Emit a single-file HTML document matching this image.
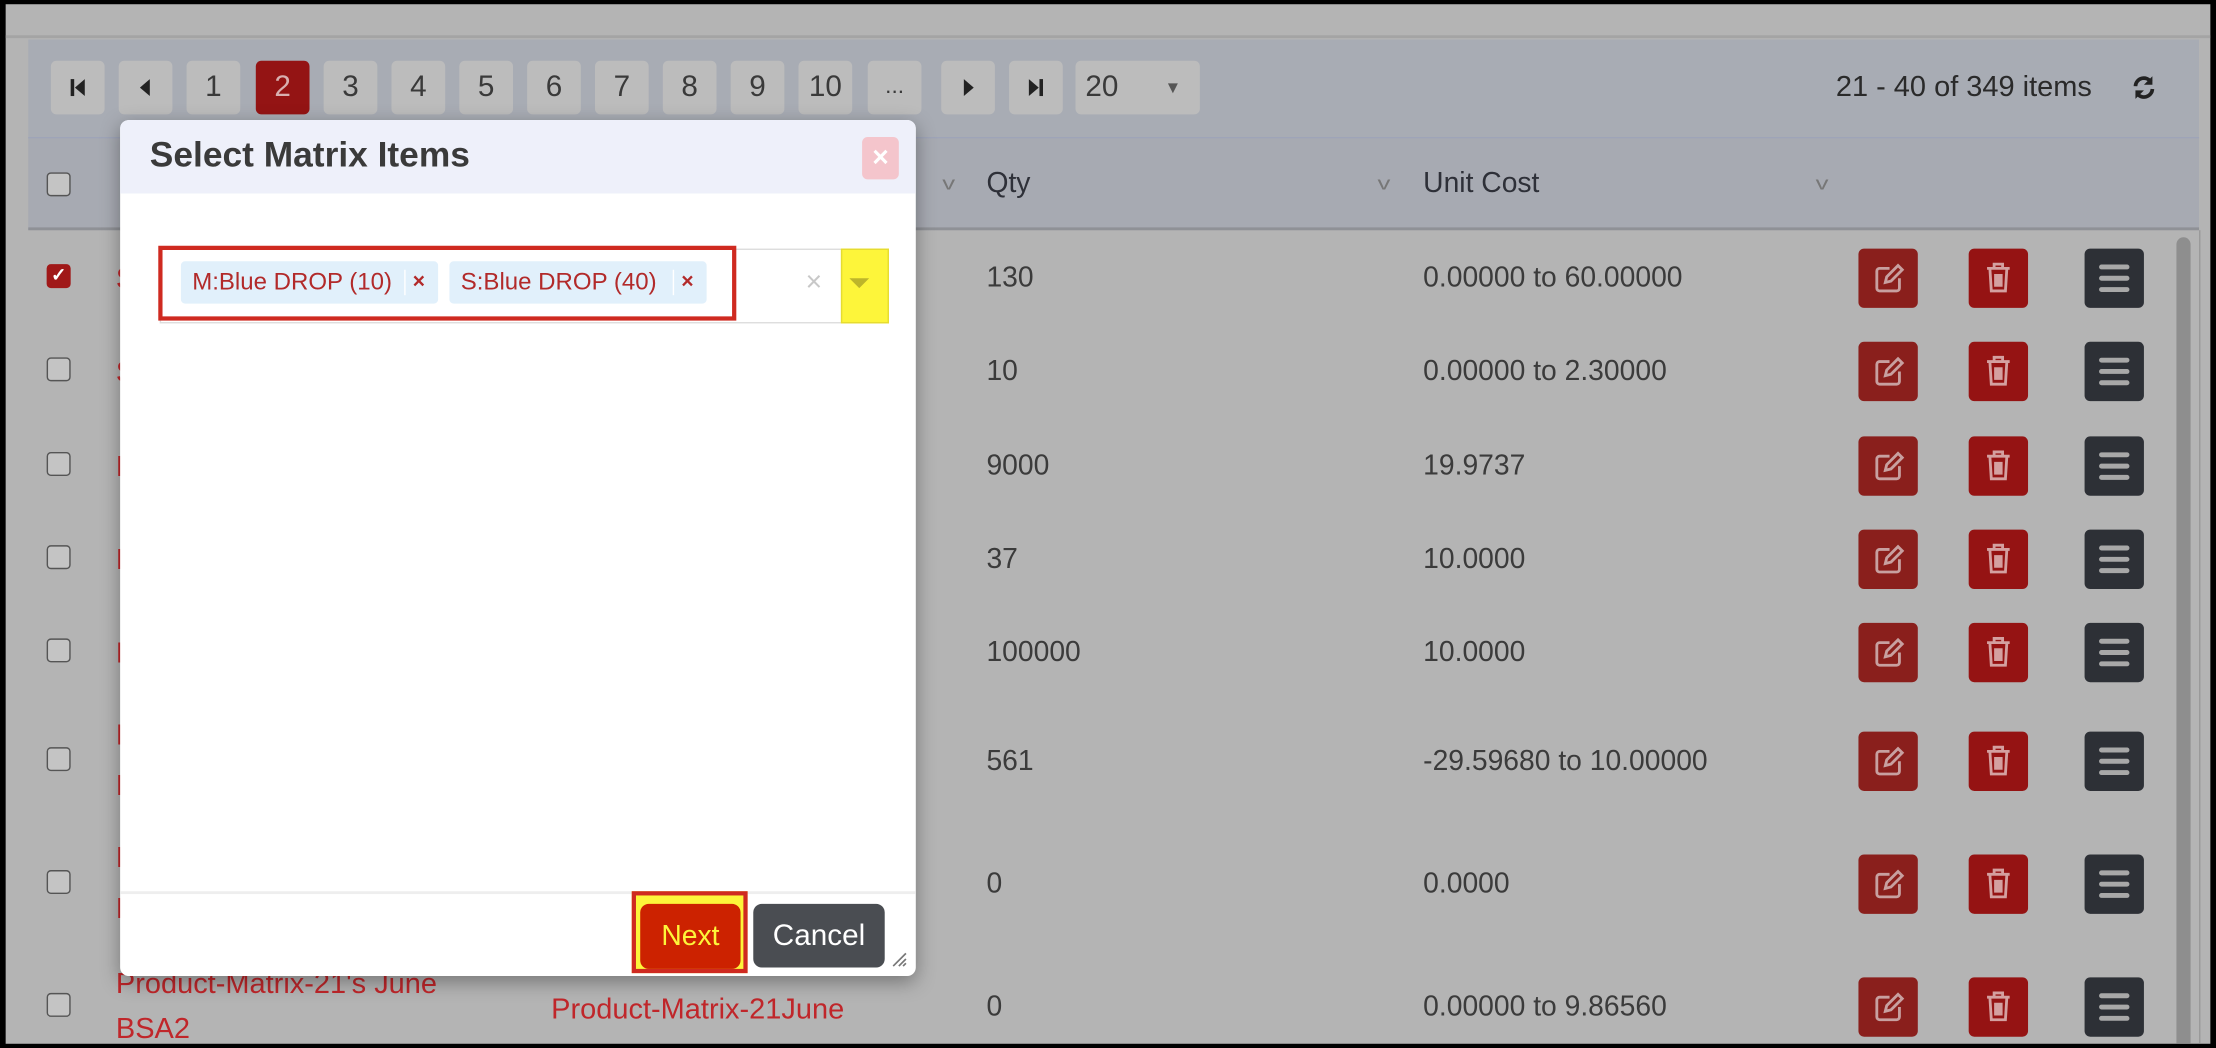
<!DOCTYPE html>
<html><head><meta charset="utf-8"><style>
*{box-sizing:border-box;margin:0;padding:0}
html,body{width:2216px;height:1048px;overflow:hidden;background:#000}
#s{position:absolute;left:0;top:0;width:1568px;height:742px;transform:scale(1.41327,1.4124);transform-origin:0 0;font-family:"Liberation Sans",sans-serif;background:#000}
.a{position:absolute}
#page{left:4px;top:3px;width:1560px;height:736px;background:#b4b4b4;overflow:hidden}
.pb{position:absolute;top:40px;width:38px;height:38px;background:#bcbcbc;border-radius:4px;color:#3a3a3a;font-size:21px;text-align:center;line-height:38px}
.txt{position:absolute;color:#3b3b3b;font-size:20px}
.red{position:absolute;color:#c0262a;font-size:20.5px}
.cb{position:absolute;left:29px;width:17px;height:17px;border:1.5px solid #555;border-radius:3px;background:#c4c4c4}
.bt{position:absolute;width:42px;height:42px;border-radius:4px}
.e{background:#8a1f1c;left:1311px}.d{background:#951313;left:1389px}.m{background:#2d3036;left:1471px}
.chev{position:absolute;color:#777;font-size:13px;transform:scaleX(1.4)}
</style></head><body><div id="s">
<div class="a" id="page">
 <div class="a" style="left:0;top:22px;width:1560px;height:2px;background:#a4a4a4"></div>
 <div class="a" style="left:16px;top:25px;width:1536px;height:70px;background:#a8acb4"></div>
 <div class="a" style="left:16px;top:94px;width:1536px;height:66px;background:#a7aab2;border-top:1px solid #9ea4b8;border-bottom:2px solid #8f9196"></div>
 <div class="pb" style="left:32px"><svg width="14" height="14" viewBox="0 0 14 14" style="margin-top:12px"><rect x="2" y="1" width="2.5" height="12" fill="#222"/><path d="M12 1 L5 7 L12 13Z" fill="#222"/></svg></div>
 <div class="pb" style="left:80px"><svg width="14" height="14" viewBox="0 0 14 14" style="margin-top:12px"><path d="M10 1 L3 7 L10 13Z" fill="#222"/></svg></div>
 <div class="pb" style="left:128px">1</div>
 <div class="pb" style="left:177px;background:#941414;color:#d8b0b0">2</div>
 <div class="pb" style="left:225px">3</div>
 <div class="pb" style="left:273px">4</div>
 <div class="pb" style="left:321px">5</div>
 <div class="pb" style="left:369px">6</div>
 <div class="pb" style="left:417px">7</div>
 <div class="pb" style="left:465px">8</div>
 <div class="pb" style="left:513px">9</div>
 <div class="pb" style="left:561px">10</div>
 <div class="pb" style="left:610px;font-size:16px">...</div>
 <div class="pb" style="left:662px"><svg width="14" height="14" viewBox="0 0 14 14" style="margin-top:12px"><path d="M4 1 L11 7 L4 13Z" fill="#222"/></svg></div>
 <div class="pb" style="left:710px"><svg width="14" height="14" viewBox="0 0 14 14" style="margin-top:12px"><path d="M2 1 L9 7 L2 13Z" fill="#222"/><rect x="9.5" y="1" width="2.5" height="12" fill="#222"/></svg></div>
 <div class="pb" style="left:757px;width:88px;text-align:left;padding-left:7px">20<span style="position:absolute;left:63px;font-size:12px;color:#555">▼</span></div>
 <div class="txt" style="left:1295px;top:47px;color:#2a2a2a;font-size:20.5px">21 - 40 of 349 items</div>
 <svg class="a" style="left:1503px;top:49px" width="20" height="20" viewBox="0 0 20 20"><path d="M4 9 A6 6 0 0 1 15 6" stroke="#222" stroke-width="2.6" fill="none"/><path d="M16 2 L16 8 L10 8Z" fill="#222"/><path d="M16 11 A6 6 0 0 1 5 14" stroke="#222" stroke-width="2.6" fill="none"/><path d="M4 18 L4 12 L10 12Z" fill="#222"/></svg>
 <div class="cb" style="top:119px"></div>
 <div class="chev" style="left:664px;top:119px">v</div>
 <div class="txt" style="left:694px;top:116px;color:#2e3038">Qty</div>
 <div class="chev" style="left:972px;top:119px">v</div>
 <div class="txt" style="left:1003px;top:116px;color:#2e3038">Unit Cost</div>
 <div class="chev" style="left:1282px;top:119px">v</div>
 <div class="cb" style="top:184px;background:#a01818;border-color:#a01818;color:#fff;font-size:13px;line-height:14px;text-align:center;font-weight:bold">✓</div>
 <div class="red" style="left:78px;top:183px">S</div><div class="txt" style="left:694px;top:183px">130</div><div class="txt" style="left:1003px;top:183px">0.00000 to 60.00000</div>
 <div class="cb" style="top:250px"></div><div class="red" style="left:78px;top:249px">S</div><div class="txt" style="left:694px;top:249px">10</div><div class="txt" style="left:1003px;top:249px">0.00000 to 2.30000</div>
 <div class="cb" style="top:317px"></div><div class="red" style="left:78px;top:316px">P</div><div class="txt" style="left:694px;top:316px">9000</div><div class="txt" style="left:1003px;top:316px">19.9737</div>
 <div class="cb" style="top:383px"></div><div class="red" style="left:78px;top:382px">P</div><div class="txt" style="left:694px;top:382px">37</div><div class="txt" style="left:1003px;top:382px">10.0000</div>
 <div class="cb" style="top:449px"></div><div class="red" style="left:78px;top:448px">P</div><div class="txt" style="left:694px;top:448px">100000</div><div class="txt" style="left:1003px;top:448px">10.0000</div>
 <div class="cb" style="top:526px"></div><div class="red" style="left:78px;top:506px">P</div><div class="red" style="left:78px;top:542px">B</div><div class="txt" style="left:694px;top:525px">561</div><div class="txt" style="left:1003px;top:525px">-29.59680 to 10.00000</div>
 <div class="cb" style="top:613px"></div><div class="red" style="left:78px;top:593px">P</div><div class="red" style="left:78px;top:629px">B</div><div class="txt" style="left:694px;top:612px">0</div><div class="txt" style="left:1003px;top:612px">0.0000</div>
 <div class="cb" style="top:700px"></div><div class="red" style="left:78px;top:682px">Product-Matrix-21's June</div><div class="red" style="left:78px;top:714px">BSA2</div><div class="red" style="left:386px;top:700px">Product-Matrix-21June</div><div class="txt" style="left:694px;top:699px">0</div><div class="txt" style="left:1003px;top:699px">0.00000 to 9.86560</div>
 <div id="btns"></div>
 <div class="a" style="left:1536px;top:165px;width:10px;height:580px;background:#8e8e8e;border-radius:5px"></div>
 <div class="a" style="left:1552px;top:160px;width:1px;height:580px;background:#999"></div>
 <div class="a" style="left:81px;top:82px;width:563px;height:606px;background:#fff;border-radius:6px;box-shadow:0 4px 14px rgba(0,0,0,.35);overflow:hidden">
  <div class="a" style="left:0;top:0;width:563px;height:52px;background:#eef0fa"></div>
  <div class="a" style="left:21px;top:11px;font-size:25px;font-weight:bold;color:#3a3a3a">Select Matrix Items</div>
  <div class="a" style="left:525px;top:12px;width:26px;height:30px;background:#f4c5cc;border-radius:4px;color:#fff;font-size:20px;font-weight:bold;text-align:center;line-height:30px">×</div>
  <div class="a" style="left:28px;top:91px;width:516px;height:53px;border:1.5px solid #ddd"></div>
  <div class="a" style="left:27px;top:89px;width:409px;height:53px;border:3px solid #cf2a20"></div>
  <div class="a" style="left:43px;top:100px;width:182px;height:30px;background:#e1f0fb;border-radius:3px;color:#b22a2a;font-size:17px;line-height:30px;padding-left:8px">M:Blue DROP (10)<span style="position:absolute;left:158px;top:6px;height:18px;border-left:1px solid #fff"></span><span style="position:absolute;left:164px;font-weight:bold;font-size:15px">×</span></div>
  <div class="a" style="left:233px;top:100px;width:182px;height:30px;background:#e1f0fb;border-radius:3px;color:#b22a2a;font-size:17px;line-height:30px;padding-left:8px">S:Blue DROP (40)<span style="position:absolute;left:158px;top:6px;height:18px;border-left:1px solid #fff"></span><span style="position:absolute;left:164px;font-weight:bold;font-size:15px">×</span></div>
  <div class="a" style="left:485px;top:104px;color:#c8c8c8;font-size:20px">×</div>
  <div class="a" style="left:510px;top:91px;width:34px;height:53px;background:#fdf53a;border:1px solid #e6dc30"></div>
  <div class="a" style="left:516px;top:112px;width:0;height:0;border-left:7px solid transparent;border-right:7px solid transparent;border-top:7px solid #bdb52a"></div>
  <div class="a" style="left:0;top:546px;width:563px;height:2px;background:#eee"></div>
  <div class="a" style="left:362px;top:546px;width:82px;height:58px;border:3px solid #cf2a20;background:#fdf53a"></div>
  <div class="a" style="left:368px;top:555px;width:71px;height:46px;background:#cc2200;border-radius:6px;color:#fdf53a;font-size:20px;text-align:center;line-height:46px">Next</div>
  <div class="a" style="left:448px;top:555px;width:93px;height:45px;background:#4a4d52;border-radius:6px;color:#fff;font-size:21px;text-align:center;line-height:45px">Cancel</div>
  <svg class="a" style="left:545px;top:588px" width="12" height="12" viewBox="0 0 12 12"><path d="M11 2 L2 11 M11 6 L6 11 M11 9 L9 11" stroke="#777" stroke-width="1.2"/></svg>
 </div>
</div>
<script>
var ys=[173,239,306,372,438,515,602,689],h='';
ys.forEach(function(y){
h+='<div class="bt e" style="top:'+y+'px"><svg width="42" height="42" viewBox="0 0 42 42"><path d="M22 14 H15 a2 2 0 0 0 -2 2 V28 a2 2 0 0 0 2 2 H27 a2 2 0 0 0 2 -2 V21" stroke="#c8a0a0" stroke-width="2" fill="none"/><path d="M19 24 L20 20 L28 12 L31 15 L23 23Z" stroke="#c8a0a0" stroke-width="2" fill="none"/></svg></div>';
h+='<div class="bt d" style="top:'+y+'px"><svg width="42" height="42" viewBox="0 0 42 42"><path d="M13 14 H29 M18 14 V11 H24 V14 M15 14 L16 30 H26 L27 14 M19 18 V27 M21 18 V27 M23 18 V27" stroke="#d4a0a0" stroke-width="2" fill="none"/></svg></div>';
h+='<div class="bt m" style="top:'+y+'px"><svg width="42" height="42" viewBox="0 0 42 42"><path d="M12 13 H30 M12 21 H30 M12 29 H30" stroke="#a8a8a8" stroke-width="3.5" stroke-linecap="round"/></svg></div>';
});
document.getElementById('btns').innerHTML=h;
</script>
</div></body></html>
